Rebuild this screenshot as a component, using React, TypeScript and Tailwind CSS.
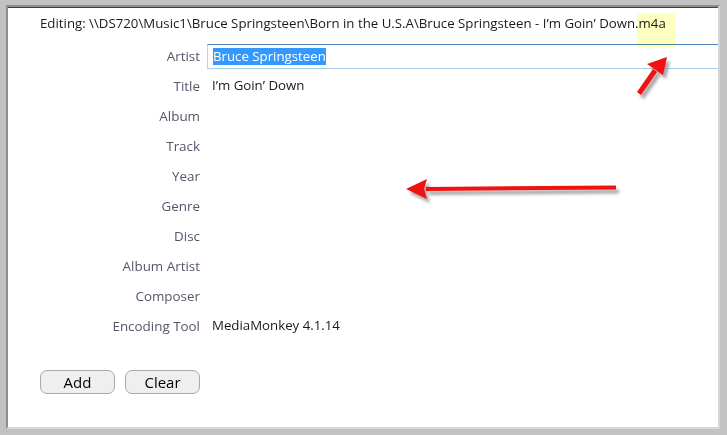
import React from "react";

const rows: { label: string; value?: string; input?: boolean }[] = [
  { label: "Artist", value: "Bruce Springsteen", input: true },
  { label: "Title", value: "I\u2019m Goin\u2019 Down" },
  { label: "Album" },
  { label: "Track" },
  { label: "Year" },
  { label: "Genre" },
  { label: "Disc" },
  { label: "Album Artist" },
  { label: "Composer" },
  { label: "Encoding Tool", value: "MediaMonkey 4.1.14" },
];

export default function App() {
  return (
    <div
      className="relative w-[727px] h-[435px] overflow-hidden bg-[#c2c2c2] pl-[6px] pt-[5px] pr-[7px] pb-[6px] flex"
      style={{ fontFamily: '"Open Sans", "Noto Sans", sans-serif' }}
    >
      <div className="flex-1 flex border-l-2 border-t-2 border-r-2 border-b-2 border-l-[#8e8e8e] border-t-[#8e8e8e] border-r-[#d6d6d6] border-b-[#d6d6d6]">
        <div className="flex-1 flex flex-col bg-white border-t border-[#2c4466] overflow-hidden">
          <div className="h-[33px] flex items-center pb-[2px] pl-[32px] text-[13.25px] text-[#1a1a1a] whitespace-nowrap">
            {"Editing: \\\\DS720\\Music1\\Bruce Springsteen\\Born in the U.S.A\\Bruce Springsteen - I\u2019m Goin\u2019 Down.m4a"}
          </div>
          <div className="flex flex-col">
            {rows.map((r) => (
              <div key={r.label} className="h-[30px] flex items-center">
                <div className="w-[192px] shrink-0 text-right text-[13.4px] text-[#55566a]">
                  {r.label}
                </div>
                {r.input ? (
                  <div className="ml-[7px] flex-1 h-[25px] flex items-center pl-[5px] border-t border-l border-b border-t-[#4d87bd] border-l-[#b9d3ea] border-b-[#aacde6] -mr-[4px]">
                    <span className="bg-[#3399ff] text-white text-[13.25px] leading-[17px]">
                      {r.value}
                    </span>
                  </div>
                ) : (
                  <div className="ml-[12px] text-[13.25px] text-[#1a1a1a]">{r.value}</div>
                )}
              </div>
            ))}
          </div>
          <div className="flex gap-[10px] pl-[32px] mt-[29px]">
            <button className="w-[75px] h-[24px] rounded-[7px] border border-[#a9a9a9] bg-[#efefef] text-[15px] text-black flex items-center justify-center">
              Add
            </button>
            <button className="w-[75px] h-[24px] rounded-[7px] border border-[#a9a9a9] bg-[#efefef] text-[15px] text-black flex items-center justify-center">
              Clear
            </button>
          </div>
        </div>
      </div>

      {/* yellow highlight behind m4a */}
      <div className="absolute left-[637px] top-[13px] w-[39px] h-[34px] bg-[#ffffc2] mix-blend-multiply pointer-events-none" />

      {/* annotation arrows */}
      <svg
        className="absolute inset-0 pointer-events-none"
        width="727"
        height="435"
        viewBox="0 0 727 435"
      >
        <defs>
          <filter id="sh" x="-20%" y="-50%" width="140%" height="200%">
            <feGaussianBlur stdDeviation="1.6" />
          </filter>
        </defs>
        <g transform="translate(3,4)" filter="url(#sh)" fill="#8a8a8a" opacity="0.75">
          <polygon points="616,185.5 616,189.5 426,191 426,187" />
          <polygon points="406,189 427,179 424,189 427,199" />
          <polygon points="637,92 641,95 657,72 653,69" />
          <polygon points="667,57 647,64 663,75" />
        </g>
        <g fill="#f21010">
          <polygon points="616,185.5 616,189.5 426,191 426,187" />
          <polygon points="406,189 427,179 424,189 427,199" />
          <polygon points="637,92 641,95 657,72 653,69" />
          <polygon points="667,57 647,64 663,75" />
        </g>
      </svg>
    </div>
  );
}
